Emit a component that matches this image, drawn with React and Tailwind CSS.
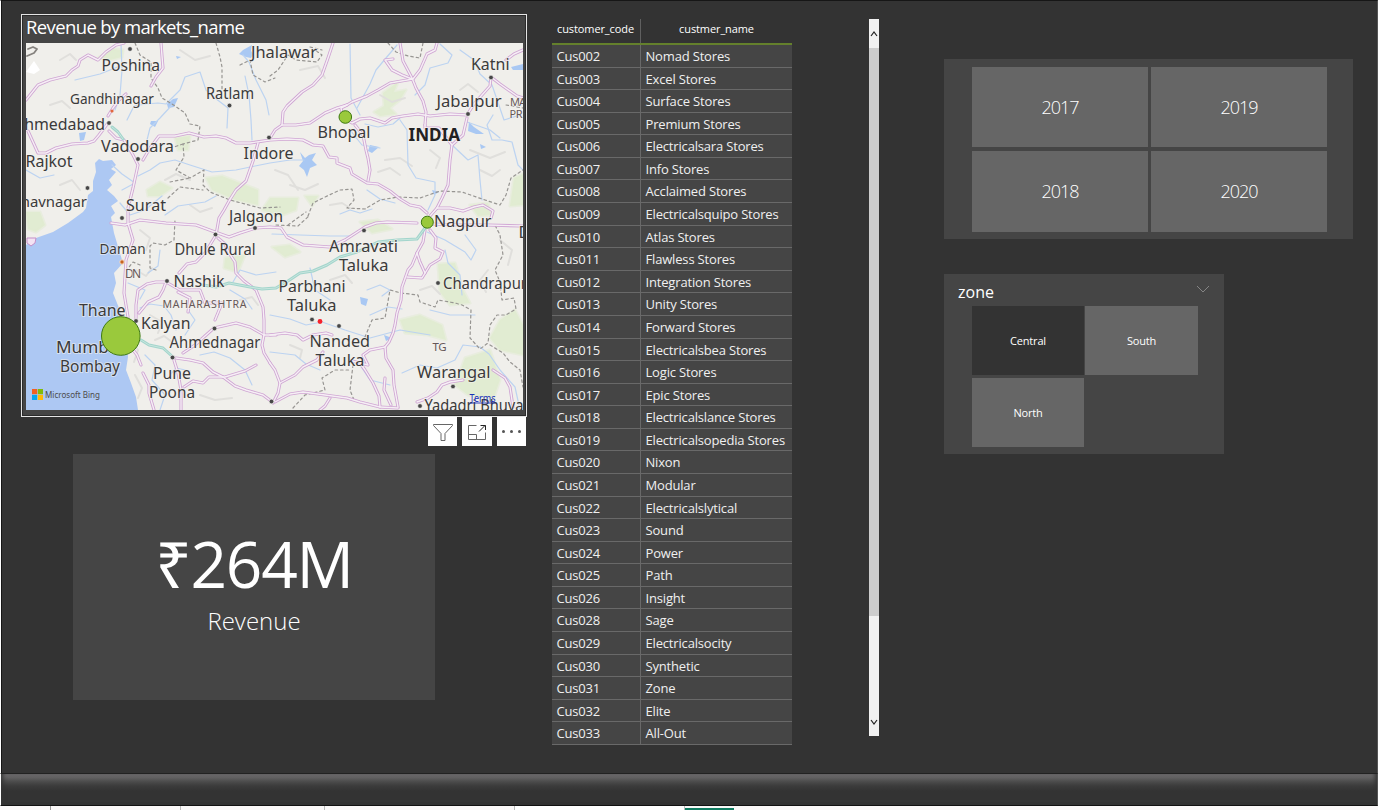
const customers = [
  ['Cus002', 'Nomad Stores'], ['Cus003', 'Excel Stores'], ['Cus004', 'Surface Stores'],
  ['Cus005', 'Premium Stores'], ['Cus006', 'Electricalsara Stores'], ['Cus007', 'Info Stores'],
  ['Cus008', 'Acclaimed Stores'], ['Cus009', 'Electricalsquipo Stores'], ['Cus010', 'Atlas Stores'],
  ['Cus011', 'Flawless Stores'], ['Cus012', 'Integration Stores'], ['Cus013', 'Unity Stores'],
  ['Cus014', 'Forward Stores'], ['Cus015', 'Electricalsbea Stores'], ['Cus016', 'Logic Stores'],
  ['Cus017', 'Epic Stores'], ['Cus018', 'Electricalslance Stores'], ['Cus019', 'Electricalsopedia Stores'],
  ['Cus020', 'Nixon'], ['Cus021', 'Modular'], ['Cus022', 'Electricalslytical'], ['Cus023', 'Sound'],
  ['Cus024', 'Power'], ['Cus025', 'Path'], ['Cus026', 'Insight'], ['Cus028', 'Sage'],
  ['Cus029', 'Electricalsocity'], ['Cus030', 'Synthetic'], ['Cus031', 'Zone'], ['Cus032', 'Elite'],
  ['Cus033', 'All-Out'],
];

const roads = [
  '26,100 38,85 50,80 66,76 72,70 78,66 80,60 88,55 98,60 106,52 116,45 124,43',
  '161,43 162,56 163,68 156,77 151,86',
  '108,123 99,135 94,141 88,143 72,144 56,148 46,153 38,153 33,142 28,131',
  '108,116 113,108 119,100 126,94',
  '109,131 116,138 124,140 133,155 138,165 133,188 128,208 128,223 133,240 126,260 124,293 128,317',
  '143,160 150,148 159,136 175,136 189,133 204,137 216,136 226,138 236,143 250,143 270,140 287,139 303,140 313,145 323,146 329,157 337,158 337,163 350,168 352,174 367,183 378,184 390,191 400,199 410,205 420,207 427,213',
  '333,43 328,58 322,75 313,85 302,92 287,106 283,112 282,125 275,130 270,138',
  '282,125 296,125 310,123 325,113 337,108 347,105 352,102 367,96 378,90 390,83 413,79 420,70 427,54 435,50 437,43',
  '400,43 403,61 412,78 416,88 423,101 426,112 425,125',
  '393,59 385,60 392,70 402,75 412,79',
  '347,105 341,108 343,118 352,123 360,119 370,118 385,123 392,118 403,116 418,114 430,116 450,114 467,115 474,104 490,86 491,77 500,84 517,96 523,98',
  '467,118 463,135 452,145 450,160 448,185 442,198 437,208 430,216',
  '355,125 363,135 366,150 368,158 370,170 368,181',
  '425,125 425,128 439,128 452,145',
  '258,143 253,161 246,181 236,190 229,201 224,210 219,218 216,235 205,253 196,262 187,264 179,273',
  '111,223 125,225 140,220 166,223 196,225 215,232 229,237 240,233 256,228 270,227 281,228 287,237 303,245 316,246 330,247 345,240 365,227 376,223 387,222 417,223',
  '433,224 460,225 487,225 523,226',
  '425,230 423,242 417,253 412,265 408,270 402,287 401,300 397,313 395,325 393,333 389,342 385,347 386,358 393,370 394,385 398,407',
  '430,230 436,238 435,248 443,252 440,259 430,265 422,278 407,277',
  '417,253 420,262 425,273',
  '385,347 370,350 363,355 368,365 360,363',
  '270,335 285,333 297,335 303,340 313,335 326,333 332,335',
  '270,363 275,370 280,383 278,393 273,403',
  '280,383 295,375 303,367 317,360 323,352',
  '275,402 290,394 303,392 325,395 347,398 360,402 380,407 379,396 373,383 365,370 360,363 352,361',
  '330,398 325,406 320,410', '380,407 398,408',
  '183,353 195,345 205,336 214,328 236,323 250,327 264,335 276,335',
  '264,335 264,320 263,307 256,290 244,281 236,273 235,262 229,253 225,244 218,238',
  '264,335 262,345 264,353 270,363',
  '176,358 190,360 203,363 213,372 223,377 235,386 246,390 263,395 271,401',
  '184,387 193,381 203,383 209,377 225,377 245,371 256,365',
  '173,357 178,373 181,390 181,410', '143,373 149,385 149,393 154,410',
  '136,320 136,305 138,290 147,284 156,282 166,282 163,290 159,297 148,302 139,313',
  '131,347 137,355 141,365', '166,282 180,290 200,290 205,303 222,303 215,320',
  '417,402 428,398 437,392 442,385 450,382 463,380', '493,370 505,378 510,387 513,407',
  '437,208 450,208 463,211 474,207 483,205 493,211 491,218', '523,50 514,54 506,60',
  '178,292 190,298 188,312', '385,378 384,390 391,405',
];

const tealRoads = [
  '203,285 216,287 229,283 250,287 262,289 276,288 288,281 300,273 313,271 327,265 340,257 357,252 378,242 397,240 417,239 425,228',
  '141,340 149,345 163,348 173,357', '112,127 118,132 123,139',
];

const rivers = [
  '121,44 122,70 120,95 115,110', '127,120 134,106 146,104 158,103 166,104 180,90 185,77 200,72 206,90 215,98 228,108 227,128',
  '75,80 100,74 120,66', '147,140 150,128 160,118 172,105', '245,76 249,95 251,120 252,140',
  '243,55 249,62 256,80 266,100 269,115', '138,176 150,170 160,163 175,160 190,165 212,172 236,170 255,166 270,163 290,160 304,160',
  '350,44 351,98 360,115', '397,45 386,58 376,70 370,84 357,108', '440,44 452,55 448,63 430,68 425,85 415,95', '460,50 474,60 480,74 492,85 504,120 520,115',
  '350,130 362,145 380,148', '365,124 378,127 393,124 400,118', '400,120 407,130 408,165 416,178 435,182 435,195 428,210',
  '452,145 468,160 478,155 480,180 482,200', '493,115 487,125 492,140 502,140 512,142 518,165 523,170',
  '467,122 490,130 500,138', '367,190 380,199 395,203', '427,232 445,240 465,252 471,260 476,250 465,235',
  '445,250 448,263 460,275 462,295', '272,234 300,235 330,236 350,236', '310,268 315,290 330,300', '367,290 380,285 390,290 382,296',
  '270,315 290,319 306,325 322,322 345,330 370,338 400,330 430,335', '430,310 450,315 475,315',
  '402,373 420,365 437,368 455,360 463,345 480,347 489,354 500,370 515,387 520,410',
  '270,352 295,355 306,364 320,370', '360,365 370,380 390,385', '148,273 158,266 160,250', '140,308 150,304 164,306 171,315 176,330',
  '188,310 195,320 185,335', '145,355 155,365 152,380 165,395 160,410', '200,355 214,352 230,358 245,370 252,385',
  '170,375 176,368 190,371', '233,282 240,270 256,275 276,272', '165,215 178,206 205,202 216,196', '112,165 122,174 135,183 122,190',
  '120,203 130,215 145,210 162,196', '340,214 350,210 360,213 372,209', '26,170 40,178 54,175', '128,283 145,290 140,299',
  '230,290 245,299 252,309', '370,315 388,307 402,309',
];

const reliefLines = [
  '50,105 62,101 70,108', '180,50 195,60 210,56', '60,185 72,180 80,190', '290,185 305,190 318,184', '385,160 400,158 412,166',
  '470,150 490,158 505,152', '500,240 512,250 508,265', '190,205 200,212 212,208', '130,340 138,350 134,362', '150,315 162,322 158,333',
  '200,395 215,400 232,398', '240,300 252,297 258,305', '330,280 345,275 352,283', '420,290 432,286 440,294', '300,70 318,66 325,78',
  '380,95 392,102 405,98', '460,90 468,84 478,92', '140,230 150,238 146,250', '136,270 146,276 152,268', '155,340 164,336 172,342',
  '290,345 302,350 300,358', '430,150 440,158 436,168', '330,205 342,203 350,208', '60,60 70,54 76,60', '480,170 492,176 500,170',
  '135,375 142,388 138,398', '165,180 176,174 190,180', '275,170 288,175 298,190', '400,175 390,168 378,172', '488,270 480,280 486,292',
];

const borders = [
  '216,43 220,57 222,67 222,90', '270,76 278,70 288,55 296,60 317,62 322,55 315,50', '310,47 322,50',
  '135,43 140,55 151,62 151,78 158,88 162,98 172,104 185,113 190,124 200,126 198,140 183,144 184,157 176,170 190,178 204,170 203,185 210,192 230,200 260,208 280,207',
  '183,144 174,147', '170,182 190,178', '168,198 180,187 203,190', '388,43 396,52 408,56 420,58 423,43',
  '308,216 313,203 325,197 340,190 352,189 354,200 347,208 365,209 380,200 398,197 420,198 440,191 462,192 485,200 500,205 506,195 511,178 523,170',
  '156,270 150,268 150,246 153,243 165,245 174,240 175,220', '140,265 133,262 126,271',
  '365,337 372,320 385,318 390,290 401,293 418,295 420,302 435,307 438,300 455,303 462,305 471,310 470,338 480,349 488,343 490,325 497,315 506,315 516,309 514,298 502,300 500,282 495,270 503,255 500,235 495,225',
  '490,345 503,353 510,362 520,370 523,387', '353,365 350,390 354,400', '293,408 305,395 325,390 322,378 335,370 350,370',
  '506,105 523,108', '240,65 250,60 253,75 265,82 275,78', '288,225 306,212', '276,225 298,226 310,215',
];

const greens = [
  '98,58 112,49 123,50 122,57 110,60', '206,178 222,176 240,183 258,190 258,205 236,200 212,190', '383,93 398,82 394,92 406,90 400,100 390,108 396,114 380,116 374,112 384,106',
  '270,198 298,198 296,210 280,216 262,210', '147,190 160,182 172,188 160,196 148,196', '175,138 190,136 188,150 178,150',
  '26,212 40,212 45,225 36,232 28,229', '400,320 420,315 442,325 446,340 428,335 405,333', '438,264 455,263 463,290 470,303 450,305 440,292',
  '500,320 515,310 523,325 523,355 500,350 490,338', '465,358 490,350 500,380 493,400 468,395 455,385', '514,178 523,174 523,205 510,206',
  '225,258 245,255 238,272 224,268', '360,222 378,220 392,229 372,233', '305,196 318,196 312,206', '470,205 488,203 492,215 478,216', '272,247 290,245 300,252 285,257',
];

const lakes = [
  '243,50 252,45 251,51 254,54 251,58 246,57 239,54', '300,152 305,158 309,155 316,153 312,160 317,165 310,168 307,177 304,170 299,166 303,161',
  '167,104 173,99 178,98 174,107 168,108', '151,121 158,121 155,127 150,124', '79,133 86,132 84,140 80,141',
  '469,122 474,127 484,134 476,134 468,131', '511,67 523,64 523,70 513,70', '370,145 379,147 372,153 368,151',
  '360,297 368,299 366,306 361,304', '384,335 392,338 386,341', '176,56 181,57 177,59', '432,190 439,192 434,195', '480,144 486,147 481,149',
];

const labels = [
  ['Poshina', 101.5, 70.5, 58.5, 16], ['Gandhinagar', 70, 103.5, 84, 14.5], ['Ahmedabad', 14, 130, 91, 16],
  ['Vadodara', 101, 151.5, 73, 16.5], ['Rajkot', 25.5, 166.5, 47, 16], ['Bhavnagar', 11, 206.5, 76, 15], ['Surat', 126, 210.5, 40, 16],
  ['Jhalawar', 251, 57.5, 66, 15.5], ['Ratlam', 206, 98.5, 48, 15.5], ['Indore', 243.5, 159, 50, 16], ['Bhopal', 317.5, 137.5, 53, 16],
  ['Jabalpur', 436.5, 106.5, 65, 16], ['Katni', 471, 70, 38.5, 16], ['Jalgaon', 229, 221.5, 54, 15.5], ['Nagpur', 434, 227, 57.5, 16.5],
  ['Daman', 99.5, 254, 46, 15], ['Dhule Rural', 174.5, 255, 81, 16], ['Nashik', 173.5, 287, 51, 16.5], ['Thane', 79, 316, 46.5, 16],
  ['Kalyan', 141, 328.5, 49.5, 16], ['Ahmednagar', 169.5, 347.5, 91, 16], ['Mumbai', 56, 353, 67, 16.5], ['Bombay', 60, 371.5, 60, 16],
  ['Pune', 153, 378.7, 38, 16.5], ['Poona', 149, 397.7, 46, 16.5], ['Amravati', 329, 251.5, 69, 16], ['Taluka', 339, 270.7, 49.5, 16],
  ['Parbhani', 278.5, 291.7, 67, 16], ['Taluka', 287, 310.7, 49.5, 16], ['Nanded', 309.5, 346.7, 60.5, 16.5], ['Taluka', 315.5, 365.7, 49, 16],
  ['Chandrapur', 443, 288.7, 84, 15.5], ['Warangal', 417, 377.5, 73.5, 16], ['Yadadri Bhuva', 424.5, 411, 99, 15.5], ['D', 518.5, 238, 12, 16],
];

const regionLabels = [
  ['MA', 510, 105.5, 16, 11], ['PR', 509.5, 118, 13, 11], ['DN', 125, 277.5, 16, 12],
  ['MAHARASHTRA', 162.5, 307.5, 84, 10.5], ['TG', 432.5, 351, 14, 11.5],
];

const dots = [
  [130, 49], [109, 123], [138, 159], [87.5, 188], [229.5, 105.5], [269, 137.5], [491, 77.5], [468, 114], [122, 218],
  [215.5, 234.5], [255, 228], [167, 281], [136, 321], [214.5, 328.5], [172.5, 357.5], [271.5, 401.5], [364, 230.5],
  [312, 319.5], [339, 326], [438, 283], [453, 386.5], [420, 406],
];

function MapDrawing() {
  return (
    <svg className="block h-[367px] w-[497px]" viewBox="26 43 497 367" fontFamily='"Noto Sans", "Open Sans", sans-serif'>
      <rect x="26" y="43" width="497" height="367" fill="#f0efeb" />
      {greens.map((p) => <polygon key={p} points={p} fill="#dcebc8" opacity="0.7" stroke="#dcebc8" strokeWidth="3" strokeOpacity="0.5" strokeLinejoin="round" />)}
      <polygon
        fill="#adc8f3"
        points="99,159 103,161 112,160 116,165 111,169 116,172 109,180 112,185 107,190 114,196 118,201 111,206 115,213 111,217 114,233 119,250 123,263 114,273 116,283 113,293 121,313 126,337 128,357 126,370 131,383 136,397 138,410 26,410 26,245 36,238 53,232 68,223 83,212 86,208 88,195 93,191 93,181 96,172 95,163"
      />
      {lakes.map((p) => <polygon key={p} points={p} fill="#a9c8f3" />)}
      <g fill="none" strokeLinejoin="round" strokeLinecap="round">
        {reliefLines.map((p) => <polyline key={p} points={p} stroke="#e0dfdc" strokeWidth="2" />)}
        {rivers.map((p) => <polyline key={p} points={p} stroke="#bcd3f1" strokeWidth="1.2" />)}
        {borders.map((p) => <polyline key={p} points={p} stroke="#979592" strokeWidth="1.2" strokeDasharray="2.5 3" />)}
        {roads.map((p) => <polyline key={p} points={p} stroke="#cfa5d3" strokeWidth="3.1" />)}
        {roads.map((p) => <polyline key={p + 'i'} points={p} stroke="#f6eff5" strokeWidth="1.4" />)}
        {tealRoads.map((p) => <polyline key={p} points={p} stroke="#a3d5cc" strokeWidth="3" />)}
        {tealRoads.map((p) => <polyline key={p + 'i'} points={p} stroke="#c9e6df" strokeWidth="1" />)}
        <path d="M28 49 L33 47 L37 49 L34 53 L27 56" stroke="#85827e" strokeWidth="1.8" />
      </g>
      <path d="M26 72 L34 61 L40 70 L34 74 Z" fill="#ffffff" />
      <path d="M27 238 h9 l-1 5 -4 3 -4 -3 Z" fill="#f3e3f3" stroke="#c48fc8" />
      {dots.map(([x, y]) => <circle key={x + '-' + y} cx={x} cy={y} r="2.3" fill="#464646" stroke="#f4f3f0" strokeWidth="0.6" />)}
      <circle cx="112" cy="111" r="1.6" fill="#e2683f" />
      <circle cx="122" cy="262" r="2.2" fill="#c8641f" stroke="#f5d9c2" />
      <circle cx="320" cy="321.5" r="2.4" fill="#f5222d" />
      <g stroke="#f4f2ef" strokeWidth="2" strokeOpacity="0.6" paintOrder="stroke" strokeLinejoin="round">
        {regionLabels.map(([t, x, y, w, s]) => (
          <text key={t} x={x} y={y} fontSize={s} textLength={w} lengthAdjust="spacing" fill="#665858">{t}</text>
        ))}
        {labels.map(([t, x, y, w, s]) => (
          <text key={t + y} x={x} y={y} fontSize={s} textLength={w} lengthAdjust="spacingAndGlyphs" fill="#3b3b3b">{t}</text>
        ))}
        <text x="408.5" y="140.7" fontSize="17" fontWeight="700" textLength="51.5" lengthAdjust="spacingAndGlyphs" fill="#222222">INDIA</text>
      </g>
      <g fill="#9ac93c" stroke="#3f7a13">
        <circle cx="120.8" cy="336" r="19.3" />
        <circle cx="345.3" cy="117" r="6.3" />
        <circle cx="427.3" cy="222.2" r="6" />
      </g>
      <rect x="32" y="389" width="5.2" height="5.2" fill="#f25f22" />
      <rect x="37.8" y="389" width="5.2" height="5.2" fill="#80bb0a" />
      <rect x="32" y="394.8" width="5.2" height="5.2" fill="#05a6f0" />
      <rect x="37.8" y="394.8" width="5.2" height="5.2" fill="#ffba08" />
      <text x="45" y="398" fontSize="9" textLength="55" lengthAdjust="spacingAndGlyphs" fill="#4c4c4c">Microsoft Bing</text>
      <text x="469.5" y="401.5" fontSize="10" textLength="26" lengthAdjust="spacingAndGlyphs" fill="#1a30b8">Terms</text>
      <path d="M469.5 403 H495.5" stroke="#1a30b8" strokeWidth="0.9" />
    </svg>
  );
}

function ToolButton({ children, className }) {
  return <button className={`flex h-[29px] items-center justify-center bg-white ${className}`}>{children}</button>;
}

function MapVisual() {
  return (
    <section>
      <div className="h-[403px] w-[506px] border border-[#e4e4e4] bg-[#454545] pl-1 shadow-[inset_0_0_0_1px_#2b2b2b]">
        <h2 className="flex h-[28px] items-center text-[18.5px] leading-none text-white"><span className="-mt-1 tracking-[-0.62px]">Revenue by markets_name</span></h2>
        <MapDrawing />
      </div>
      <div className="flex justify-end gap-[5px] pr-px">
        <ToolButton className="w-[29px]">
          <svg width="22" height="20" viewBox="0 0 22 20" fill="none" stroke="#666" strokeWidth="1">
            <path d="M1.5 2.5 H20.5 V3.5 L13 11.5 V18.5 H9 V11.5 L1.5 3.5 Z" />
          </svg>
        </ToolButton>
        <ToolButton className="w-[30px]">
          <svg width="20" height="18" viewBox="0 0 20 18" fill="none" stroke="#666" strokeWidth="1">
            <path d="M9.5 2.5 H1.5 V16.5 H18.5 V9.5 M1.5 11.5 H9.5 V16.5" />
            <path d="M12 8.5 L18 2.5 M13.5 2.5 H18.5 V7" stroke="#222" />
          </svg>
        </ToolButton>
        <ToolButton className="w-[29px] gap-[5px]">
          <span className="size-[3px] rounded-full bg-[#555]" />
          <span className="size-[3px] rounded-full bg-[#555]" />
          <span className="size-[3px] rounded-full bg-[#555]" />
        </ToolButton>
      </div>
    </section>
  );
}

function RevenueCard() {
  return (
    <section className="ml-[52px] mt-2 flex h-[246px] w-[362px] flex-col items-center bg-[#454545] pt-[76px] text-white">
      <div className="text-[64px] leading-[68px] tracking-[-1.3px]">₹264M</div>
      <div className="mt-[7px] text-[24px] font-light leading-[32px]">Revenue</div>
    </section>
  );
}

function CustomerTable() {
  return (
    <section className="w-[240px] text-white">
      <div className="flex h-[26px] border-b-2 border-[#64802c] text-[11px]">
        <div className="w-[89px] border-r border-[#606060] pl-[5px] leading-[19px] tracking-[-0.1px]">customer_code</div>
        <div className="flex-1 text-center leading-[19px] tracking-[-0.1px]">custmer_name</div>
      </div>
      {customers.map(([code, name]) => (
        <div key={code} className="flex h-[22.58px] border-b border-[#696969] bg-[#454545] text-[13px] leading-[23.4px] text-[#f0f0f0]">
          <div className="w-[89px] border-r border-[#696969] pl-[4.5px] tracking-[-0.17px]">{code}</div>
          <div className="flex-1 pl-[4.5px] tracking-[-0.17px]">{name}</div>
        </div>
      ))}
    </section>
  );
}

function Scrollbar() {
  return (
    <div className="flex h-[717px] w-[10px] flex-col items-center bg-[#f1f1f1]">
      <div className="flex h-[29px] items-center">
        <svg width="8" height="6" viewBox="0 0 8 6" fill="none" stroke="#222" strokeWidth="1.2"><path d="M1 5 L4 1 L7 5" /></svg>
      </div>
      <div className="h-[568px] w-full bg-[#cdcdcd]" />
      <div className="mt-auto flex h-[29px] items-center">
        <svg width="8" height="6" viewBox="0 0 8 6" fill="none" stroke="#222" strokeWidth="1.2"><path d="M1 1 L4 5 L7 1" /></svg>
      </div>
    </div>
  );
}

function YearSlicer() {
  return (
    <section className="h-[180px] w-[409px] bg-[#454545] pl-7 pt-2">
      <div className="grid grid-cols-[176px_176px] grid-rows-[80px_81px] gap-x-[3px] gap-y-1 text-[18px] text-white">
        {['2017', '2019', '2018', '2020'].map((year) => (
          <button key={year} className="flex items-center justify-center bg-[#666666] font-light tracking-[-1px]">{year}</button>
        ))}
      </div>
    </section>
  );
}

function ZoneSlicer() {
  return (
    <section className="mt-[35px] h-[180px] w-[280px] bg-[#454545] pl-7 text-white">
      <div className="-ml-[15px] flex h-8 items-start justify-between pr-[14px]">
        <h2 className="pl-px pt-[7px] text-[16px] leading-[22px]">zone</h2>
        <svg className="mt-[11px]" width="14" height="9" viewBox="0 0 14 9" fill="none" stroke="#858585"><path d="M1 1 L7 7 L13 1" /></svg>
      </div>
      <div className="grid grid-cols-[112px_113px] grid-rows-[69px_69px] gap-x-px gap-y-[3px] text-[11px] tracking-[-0.2px]">
        <button className="bg-[#333333] pt-0.5">Central</button>
        <button className="bg-[#666666] pt-0.5">South</button>
        <button className="bg-[#666666] pt-0.5">North</button>
      </div>
    </section>
  );
}

function Footer() {
  return (
    <footer>
      <div className="h-[33px] border-y border-r border-t-[#222] border-r-[#555] border-b-[#111] border-l border-l-white bg-[linear-gradient(to_bottom,#777577_0px,#646364_3px,#4a4a4a_8px,#3b3b3b_12px,#333333_17px)] shadow-[inset_4px_0_4px_-2px_#333333,inset_-4px_0_4px_-2px_#333333]" />
      <div className="flex h-1 bg-[#faf8f8]">
        <div className="w-[51px] border-r border-[#999]" />
        <div className="w-[130px] border-r border-[#bbb]" />
        <div className="w-[144px] border-r border-[#bbb]" />
        <div className="w-[190px] border-r border-[#bbb]" />
        <div className="w-[170px] border-r border-[#bbb] bg-white" />
        <div className="mt-[2px] w-[49px] bg-[#107c61]" />
      </div>
    </footer>
  );
}

export default function App() {
  return (
    <div className="flex h-[810px] w-[1378px] flex-col overflow-hidden bg-[#333333] font-['Open_Sans','Noto_Sans',sans-serif]">
      <main className="flex h-[773px] border-l border-r border-t border-l-white border-r-[#555] border-t-[#161616] shadow-[inset_1px_0_0_#161616]">
        <div className="ml-5 mt-[13px] w-[506px]">
          <MapVisual />
          <RevenueCard />
        </div>
        <div className="ml-[25px] mt-[18px]"><CustomerTable /></div>
        <div className="ml-[77px] mt-[18px]"><Scrollbar /></div>
        <div className="ml-[65px] mt-[58px]">
          <YearSlicer />
          <ZoneSlicer />
        </div>
      </main>
      <Footer />
    </div>
  );
}
